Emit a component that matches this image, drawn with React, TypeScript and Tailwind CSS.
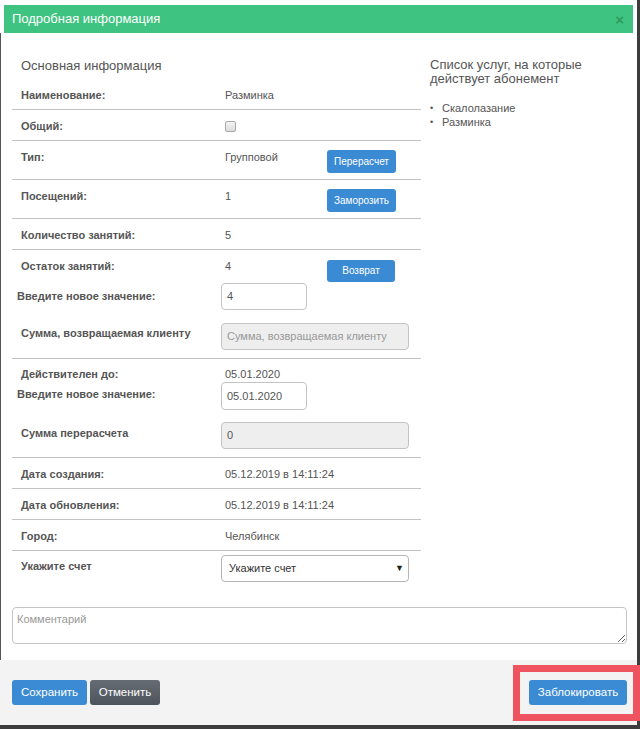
import React from 'react';

type Row = {
  label: string;
  value?: React.ReactNode;
  action?: string;
};

const font = "font-['Liberation_Sans',Arial,Helvetica,sans-serif]";

const SmallButton: React.FC<{ children: React.ReactNode; className?: string }> = ({ children, className = '' }) => (
  <button
    type="button"
    className={`w-[69px] h-[23px] rounded-[3px] bg-[#3b8bd4] text-white text-[10px] leading-none ${className}`}
  >
    {children}
  </button>
);

const TextInput: React.FC<{ value?: string; placeholder?: string; wide?: boolean; disabled?: boolean; tall?: boolean }> = ({
  value,
  placeholder,
  wide,
  disabled,
  tall,
}) => (
  <div
    className={`${wide ? 'w-[188px]' : 'w-[86px]'} ${tall ? 'h-[28px]' : 'h-[27px]'} flex items-center rounded-[4px] border border-[#c4c4c4] pl-[5px] text-[11px] whitespace-nowrap ${
      disabled ? 'bg-[#eeeeee]' : 'bg-white'
    } ${value ? 'text-[#555]' : 'text-[#999]'}`}
  >
    {value ?? placeholder}
  </div>
);

// plain label / value rows of the summary table
const SimpleRow: React.FC<Row & { last?: boolean }> = ({ label, value, action, last }) => (
  <div className={`flex pl-[9px] pt-[8px] ${action ? 'pb-[6px]' : 'pb-[5px]'} ${last ? '' : 'border-b border-[#c2c2c6]'}`}>
    <div className="w-[204px] shrink-0 font-bold leading-[17px]">{label}</div>
    <div className={`${action ? 'w-[102px]' : 'flex-1'} leading-[17px] whitespace-nowrap`}>{value}</div>
    {action && <SmallButton className="mt-[1px]">{action}</SmallButton>}
  </div>
);

const services = ['Скалолазание', 'Разминка'];

const App: React.FC = () => {
  return (
    <div className={`relative w-[640px] h-[729px] overflow-hidden bg-[#3c3c3c] ${font}`}>
      <div className="w-[637px] h-[725px] bg-white flex flex-col">
        <div className="h-[5px] shrink-0 bg-white" />

        {/* header */}
        <div className="mx-[4px] h-[28px] shrink-0 bg-[#3ec380] flex items-center justify-between pl-[8px] pr-[9px]">
          <span className="text-white text-[13px]">Подробная информация</span>
          <span className="text-[#2c9a5f] text-[15px] font-bold leading-none">×</span>
        </div>

        {/* body */}
        <div className="flex-1 min-h-0 border-l border-[#555] px-[11px] text-[#555] text-[11px]">
          <div className="flex">
            <div className="w-[409px] shrink-0">
              <div className="pt-[24px] pl-[9px] text-[13px] leading-[17px]">Основная информация</div>
              <div className="mt-[5px]">
                <SimpleRow label="Наименование:" value="Разминка" />
                <div className="flex pl-[9px] pt-[8px] pb-[5px] border-b border-[#c2c2c6]">
                  <div className="w-[204px] font-bold leading-[17px]">Общий:</div>
                  <div className="h-[17px] flex items-center">
                    <span className="block w-[11px] h-[11px] rounded-[2px] border border-[#a9a9a9] bg-gradient-to-b from-[#f4f4f4] to-[#dcdcdc]" />
                  </div>
                </div>
                <SimpleRow label="Тип:" value="Групповой" action="Перерасчет" />
                <SimpleRow label="Посещений:" value="1" action="Заморозить" />
                <SimpleRow label="Количество занятий:" value="5" />

                {/* remaining lessons + refund */}
                <div className="pt-[8px] pb-[8px] border-b border-[#c2c2c6]">
                  <div className="flex pl-[9px]">
                    <div className="w-[204px] font-bold leading-[17px]">Остаток занятий:</div>
                    <div className="w-[102px] leading-[17px]">4</div>
                    <button
                      type="button"
                      className="mt-[2px] w-[68px] h-[22px] rounded-[3px] bg-[#3b8bd4] text-white text-[10px] leading-none"
                    >
                      Возврат
                    </button>
                  </div>
                  <div className="flex items-center mt-[1px] pl-[5px]">
                    <div className="w-[204px] font-bold leading-[17px]">Введите новое значение:</div>
                    <TextInput value="4" />
                  </div>
                  <div className="flex items-start mt-[13px] pl-[9px]">
                    <div className="w-[200px] pt-[2px] font-bold leading-[17px]">Сумма, возвращаемая клиенту</div>
                    <TextInput placeholder="Сумма, возвращаемая клиенту" wide disabled />
                  </div>
                </div>

                {/* valid until + recalculation */}
                <div className="pt-[8px] pb-[8px] border-b border-[#c2c2c6]">
                  <div className="flex pl-[9px]">
                    <div className="w-[204px] font-bold leading-[15px]">Действителен до:</div>
                    <div className="leading-[15px]">05.01.2020</div>
                  </div>
                  <div className="flex items-start pl-[5px]">
                    <div className="w-[204px] pt-[4px] font-bold leading-[17px]">Введите новое значение:</div>
                    <TextInput value="05.01.2020" tall />
                  </div>
                  <div className="flex items-start mt-[12px] pl-[9px]">
                    <div className="w-[200px] pt-[3px] font-bold leading-[17px]">Сумма перерасчета</div>
                    <TextInput value="0" wide disabled />
                  </div>
                </div>

                <SimpleRow label="Дата создания:" value="05.12.2019 в 14:11:24" />
                <SimpleRow label="Дата обновления:" value="05.12.2019 в 14:11:24" />
                <SimpleRow label="Город:" value="Челябинск" />

                <div className="flex items-start pl-[9px]">
                  <div className="w-[200px] pt-[7px] font-bold leading-[17px]">Укажите счет</div>
                  <div className="mt-[4px] w-[188px] h-[27px] flex items-center justify-between rounded-[4px] border border-[#b5b5b5] bg-white pl-[7px] pr-[4px] text-[11px] text-[#333]">
                    <span>Укажите счет</span>
                    <span className="text-[9px] text-[#222]">▼</span>
                  </div>
                </div>
              </div>
            </div>

            {/* services covered by the pass */}
            <div className="ml-[9px] pt-[25px]">
              <div className="text-[13px] leading-[14px]">
                Список услуг, на которые
                <br />
                действует абонемент
              </div>
              <ul className="mt-[15px]">
                {services.map((s) => (
                  <li key={s} className="flex items-center leading-[14px]">
                    <span className="w-[12px] text-[9px]">•</span>
                    <span>{s}</span>
                  </li>
                ))}
              </ul>
            </div>
          </div>

          <textarea
            placeholder="Комментарий"
            className="mt-[25px] block w-[615px] h-[37px] rounded-[4px] border border-[#c4c4c4] px-[4px] pt-[4px] text-[11px] leading-[14px] placeholder:text-[#999] outline-none"
          />
        </div>

        {/* footer */}
        <div className="h-[65px] shrink-0 bg-[#f3f3f3] flex items-start justify-between pt-[20px] pl-[12px] pr-[10px]">
          <div className="flex gap-[3px]">
            <button type="button" className="w-[75px] h-[25px] rounded-[3px] bg-[#3b8bd4] text-white text-[11.5px]">
              Сохранить
            </button>
            <button
              type="button"
              className="w-[70px] h-[25px] rounded-[3px] bg-gradient-to-b from-[#666c74] to-[#4e545b] text-white text-[11.5px]"
            >
              Отменить
            </button>
          </div>
          <button type="button" className="w-[98px] h-[25px] rounded-[3px] bg-[#3b8bd4] text-white text-[11.5px]">
            Заблокировать
          </button>
        </div>
      </div>

      {/* highlight frame around the block button */}
      <div className="absolute left-[513px] top-[665px] w-[127px] h-[56px] border-[7px] border-[#ef5360]" />
    </div>
  );
};

export default App;
